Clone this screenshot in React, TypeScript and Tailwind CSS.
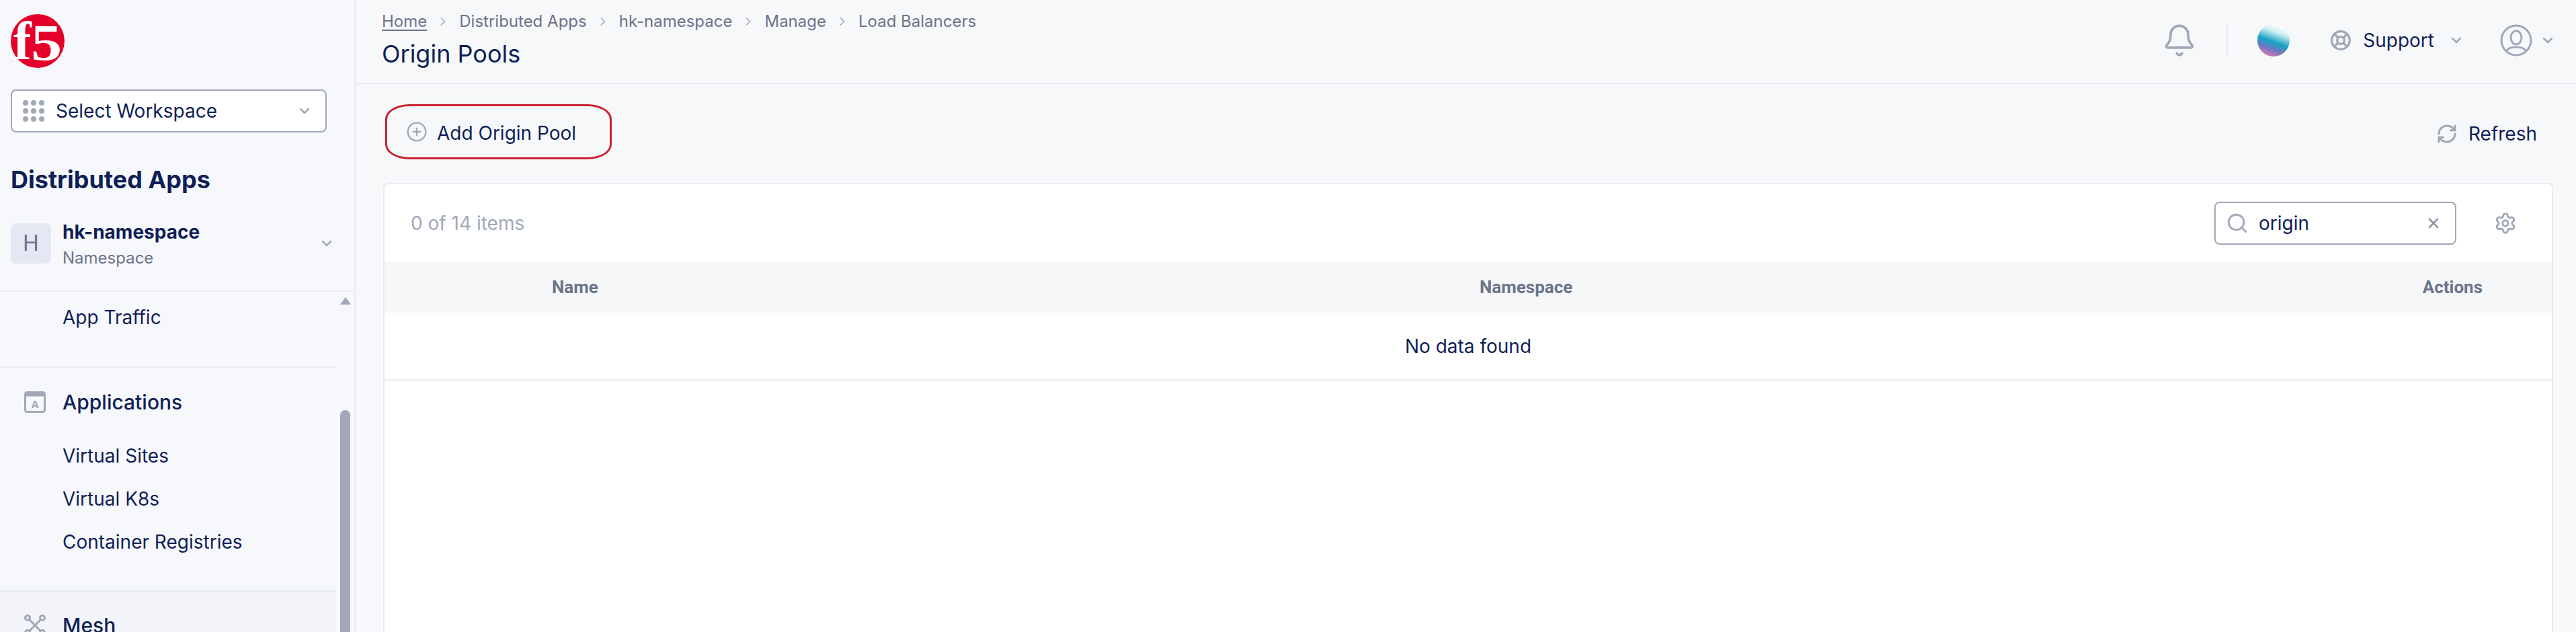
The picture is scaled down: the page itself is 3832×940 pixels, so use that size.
import { Bell, ChevronDown, ChevronRight, CirclePlus, LifeBuoy, RefreshCw, Search, Settings, X } from 'lucide-react'

function F5Logo() {
  return (
    <svg width="80" height="80" viewBox="0 0 80 80" className="shrink-0 overflow-visible">
      <circle cx="40" cy="40" r="40" fill="#e4002b" />
      <g fontFamily="'Liberation Serif', serif" fontWeight="700" fill="#fff">
        <text x="4" y="67" fontSize="80">f</text>
        <text transform="translate(30 68) scale(1.2 1)" fontSize="77">5</text>
      </g>
    </svg>
  )
}

function GridDots() {
  const spots = [0, 12, 24]
  return (
    <svg width="32" height="32" viewBox="0 0 32 32" className="shrink-0" fill="#a0a8b8">
      {spots.map((y) => spots.map((x) => <circle key={`${x}-${y}`} cx={4 + x} cy={4 + y} r="4" />))}
    </svg>
  )
}

function AppIcon() {
  return (
    <svg width="32" height="32" viewBox="0 0 32 32" className="shrink-0">
      <rect x="1.5" y="1.5" width="29" height="29" rx="3" fill="none" stroke="#a0a8b8" strokeWidth="3" />
      <rect x="1.5" y="1.5" width="29" height="6" fill="#a0a8b8" />
      <text x="16" y="25" textAnchor="middle" fontFamily="Inter, sans-serif" fontWeight="700" fontSize="15" fill="#a0a8b8">
        A
      </text>
    </svg>
  )
}

function MeshIcon() {
  return (
    <svg width="32" height="32" viewBox="0 0 32 32" className="shrink-0" fill="none" stroke="#a0a8b8" strokeWidth="3">
      <circle cx="5" cy="5" r="3.5" />
      <circle cx="27" cy="5" r="3.5" />
      <circle cx="5" cy="27" r="3.5" />
      <circle cx="27" cy="27" r="3.5" />
      <path d="M8 8 24 24M24 8 8 24" />
    </svg>
  )
}

function UserIcon() {
  return (
    <svg width="48" height="48" viewBox="0 0 48 48" fill="none" stroke="#a0a8b8" strokeWidth="3" className="shrink-0">
      <circle cx="24" cy="24" r="22" />
      <ellipse cx="24" cy="20" rx="8" ry="10" />
      <path d="M9 40c3-5 8-6 15-6s12 1 15 6" />
    </svg>
  )
}

function Crumb({ label, first }: { label: string; first?: boolean }) {
  return (
    <>
      <span className={first ? 'underline underline-offset-4' : ''}>{label}</span>
      {label !== 'Load Balancers' && <ChevronRight size={20} strokeWidth={2} className="text-[#a0a8b8] mx-[14px]" />}
    </>
  )
}

function Sidebar() {
  return (
    <aside className="w-[529px] shrink-0 h-full flex flex-col bg-[#f7f8fb] border-r-2 border-[#e9ebf2]">
      <div className="pl-4 pt-[21px] h-[434px] shrink-0 border-b-2 border-[#e9ebf2]">
        <F5Logo />
        <div className="mt-[32px] w-[470px] h-[64px] flex items-center pl-[16px] pr-[19px] bg-white border-2 border-[#a0a8b8] rounded-lg">
          <GridDots />
          <span className="ml-[17px] text-[28px] text-[#0f1f57]">Select Workspace</span>
          <ChevronDown size={24} strokeWidth={2.5} className="ml-auto text-[#a0a8b8]" />
        </div>
        <h2 className="mt-[48px] text-[36px] leading-[44px] font-bold text-[#0f1f57]">Distributed Apps</h2>
        <div className="mt-[43px] flex items-center h-[60px] pr-[29px]">
          <div className="w-[60px] h-[60px] rounded-lg bg-[#e4e8f3] flex items-center justify-center text-[32px] text-[#6b7489]">H</div>
          <div className="ml-[17px] mt-[4px]">
            <div className="text-[28px] leading-[32px] font-bold text-[#0f1f57]">hk-namespace</div>
            <div className="mt-[8px] text-[24px] leading-[30px] text-[#6b7489]">Namespace</div>
          </div>
          <ChevronDown size={24} strokeWidth={2.5} className="ml-auto text-[#a0a8b8]" />
        </div>
      </div>
      <div className="flex-1 flex min-h-0 overflow-hidden">
        <nav className="flex-1 min-w-0">
          <div className="h-[113px] border-b-2 border-[#e9ebf2] pl-[93px] pt-[20px] text-[28px] leading-[36px] text-[#0f1f57]">App Traffic</div>
          <div className="h-[333px] border-b-2 border-[#e9ebf2] pl-9 pt-[35px]">
            <div className="flex items-center gap-[25px] h-8">
              <AppIcon />
              <span className="text-[30px] font-medium text-[#0f1f57]">Applications</span>
            </div>
            <ul className="mt-[46px] pl-[57px] flex flex-col gap-7 text-[28px] leading-[36px] text-[#0f1f57]">
              <li>Virtual Sites</li>
              <li>Virtual K8s</li>
              <li>Container Registries</li>
            </ul>
          </div>
          <div className="h-[100px] bg-[#f3f5fa] pl-9 pt-[34px]">
            <div className="flex items-center gap-[25px] h-8">
              <MeshIcon />
              <span className="text-[30px] font-medium text-[#0f1f57]">Mesh</span>
            </div>
          </div>
        </nav>
        <div className="w-[27px] shrink-0 flex flex-col items-center">
          <div className="mt-[8px] w-0 h-0 border-x-[8px] border-x-transparent border-b-[11px] border-b-[#a0a8b8]" />
          <div className="mt-[157px] w-[15px] flex-1 rounded-t-lg bg-[#a0a8b8]" />
        </div>
      </div>
    </aside>
  )
}

function TopBar() {
  return (
    <header className="h-[125px] shrink-0 border-b-2 border-[#e9ebf2] pl-[39px] flex justify-between">
      <div className="pt-[16px]">
        <div className="flex items-center h-8 text-[24px] text-[#6b7489]">
          <Crumb label="Home" first />
          <Crumb label="Distributed Apps" />
          <Crumb label="hk-namespace" />
          <Crumb label="Manage" />
          <Crumb label="Load Balancers" />
        </div>
        <h1 className="mt-[12px] text-[36px] leading-10 text-[#0f1f57]">Origin Pools</h1>
      </div>
      <div className="flex items-center h-[120px] pr-[30px] text-[#a0a8b8]">
        <Bell size={52} strokeWidth={1.75} />
        <div className="w-[2px] h-12 bg-[#e9ebf2] ml-[44px] mr-[44px]" />
        <div className="w-12 h-12 rounded-full bg-[linear-gradient(200deg,#ffffff_12%,#c8eef2_30%,#18a0c4_54%,#6f78c0_72%,#e878ac_92%)]" />
        <LifeBuoy size={32} strokeWidth={2.5} className="ml-[60px]" />
        <span className="ml-[17px] text-[28px] text-[#0f1f57]">Support</span>
        <ChevronDown size={24} strokeWidth={2.5} className="ml-[21px]" />
        <div className="ml-[53px]"><UserIcon /></div>
        <ChevronDown size={24} strokeWidth={2.5} className="ml-[11px]" />
      </div>
    </header>
  )
}

function Toolbar() {
  return (
    <div className="h-[147px] shrink-0 pl-[44px] pr-[58px] flex items-center justify-between text-[28px] text-[#0f1f57]">
      <div className="flex items-center h-[82px] w-[337px] mb-[5px] pl-[28px] border-[3px] border-[#cc2230] rounded-[36px/22px]">
        <CirclePlus size={32} strokeWidth={1.75} className="text-[#a0a8b8]" />
        <span className="ml-[14px] mt-[4px]">Add Origin Pool</span>
      </div>
      <div className="flex items-center gap-[16px]">
        <RefreshCw size={32} strokeWidth={2.25} className="text-[#a0a8b8]" />
        <span>Refresh</span>
      </div>
    </div>
  )
}

function OriginTable() {
  return (
    <section className="ml-[41px] mr-[34px] flex-1 bg-white border-2 border-b-0 border-[#e9ebf2] rounded-t-lg">
      <div className="h-[115px] flex items-center pl-[39px] pr-[52px]">
        <span className="text-[28px] text-[#a0a8b8]">0 of 14 items</span>
        <div className="ml-auto w-[360px] h-[64px] flex items-center pl-[15px] pr-[20px] border-2 border-[#a0a8b8] rounded-lg">
          <Search size={34} strokeWidth={2} className="text-[#a0a8b8]" />
          <span className="ml-[15px] text-[28px] text-[#0f1f57]">origin</span>
          <X size={24} strokeWidth={2.5} className="ml-auto text-[#8b93a5]" />
        </div>
        <Settings size={34} strokeWidth={2} className="ml-[56px] text-[#a0a8b8]" />
      </div>
      <div className="h-[76px] bg-[#f6f7f9] flex items-center text-[26px] font-bold text-[#6b7489] font-['Roboto',sans-serif]">
        <span className="w-[1629px] pl-[249px]">Name</span>
        <span>Namespace</span>
        <span className="ml-auto pr-[103px]">Actions</span>
      </div>
      <div className="h-[101px] border-b-2 border-[#e9ebf2] flex items-center justify-center text-[28px] text-[#0f1f57]">No data found</div>
    </section>
  )
}

export default function App() {
  return (
    <div className="w-[3832px] h-[940px] overflow-hidden flex bg-[#f7f8fa] font-['Inter',sans-serif]">
      <Sidebar />
      <main className="flex-1 min-w-0 flex flex-col">
        <TopBar />
        <Toolbar />
        <OriginTable />
      </main>
    </div>
  )
}
